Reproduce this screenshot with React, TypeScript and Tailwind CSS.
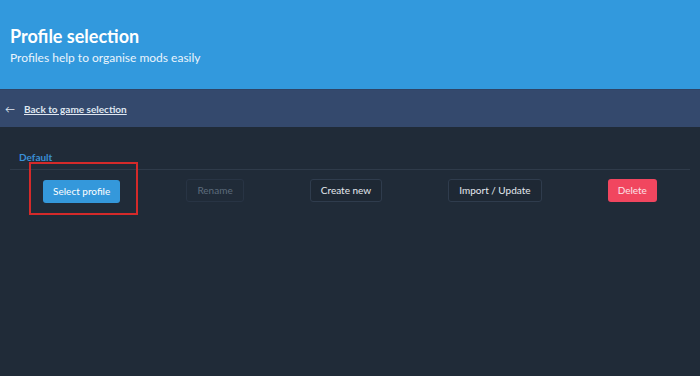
import React from "react";

export default function App() {
  const font = { fontFamily: 'Lato, "Noto Sans", sans-serif' };
  return (
    <div className="w-[700px] h-[376px] bg-[#202b38] overflow-hidden" style={font}>
      <div className="h-[89px] bg-[#3299dd] px-[10px] pt-[25px] text-white">
        <div className="text-[18px] font-bold leading-[22px]">Profile selection</div>
        <div className="text-[12px] leading-[16px] mt-[3px] text-[#eaf4fc]">Profiles help to organise mods easily</div>
      </div>
      <div className="h-[38px] bg-[#34496d] border-t border-[#2f4466] flex items-center px-[5px] text-[#dfe6f0]">
        <span className="text-[10px] leading-none mr-[9px]">←</span>
        <a className="text-[10px] font-bold underline leading-none">Back to game selection</a>
      </div>
      <div className="px-[10px] pt-[23px]">
        <div className="pl-[9px] text-[10px] font-bold text-[#3a8fd6] leading-[14px]">Default</div>
        <div className="mt-[5px] border-t border-[#2f3b4a]" />
        <div className="flex justify-around items-center mt-[7px]">
          <div className="relative">
            <button className="h-[23px] px-[10px] rounded-[3px] bg-[#3498db] text-white text-[10px]">Select profile</button>
            <div className="absolute left-[-14px] right-[-18px] top-[-15px] bottom-[-12px] border-2 border-[#d42a2a] pointer-events-none" />
          </div>
          <button className="h-[23px] px-[10px] rounded-[3px] border border-[#283444] text-[#5d6b7c] text-[10px]">Rename</button>
          <button className="h-[23px] px-[10px] rounded-[3px] border border-[#2f3c4d] bg-[#1e2834] text-[#e4e9ef] text-[10px]">Create new</button>
          <button className="h-[23px] px-[10px] rounded-[3px] border border-[#2f3c4d] bg-[#1e2834] text-[#e4e9ef] text-[10px]">Import / Update</button>
          <button className="h-[23px] px-[10px] rounded-[3px] bg-[#f1465f] text-[#fbe3e7] text-[10px]">Delete</button>
        </div>
      </div>
    </div>
  );
}
